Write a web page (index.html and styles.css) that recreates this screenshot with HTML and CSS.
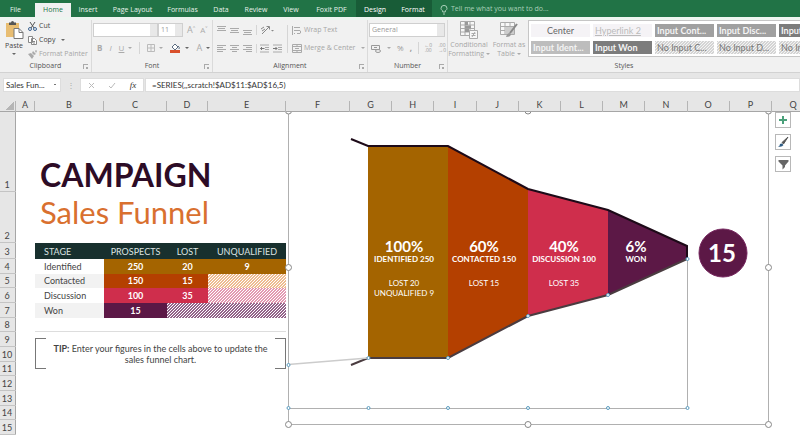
FILE: index.html
```html
<!DOCTYPE html>
<html lang="en">
  <head>
    <meta charset="UTF-8">
    <meta name="viewport" content="width=device-width, initial-scale=1.0">
    <title>Campaign Sales Funnel</title>
    <link rel="stylesheet" href="styles.css">
  </head>
  <body>
    <nav class="tabs">
      <a href="#" class="tab file">File</a>
      <a href="#" class="tab home">Home</a>
      <a href="#" class="tab insert">Insert</a>
      <a href="#" class="tab layout">Page Layout</a>
      <a href="#" class="tab formulas">Formulas</a>
      <a href="#" class="tab data">Data</a>
      <a href="#" class="tab review">Review</a>
      <a href="#" class="tab view">View</a>
      <a href="#" class="tab foxit">Foxit PDF</a>
      <a href="#" class="tab context">Design</a>
      <a href="#" class="tab context">Format</a>
      <a href="#" class="tell">
        <svg width="8" height="10" viewBox="0 0 8 10" fill="none" stroke="currentColor"><path d="M2.7 7V5.8C1.4 5 1 4.300 1 3.400a3 3 0 0 1 6 0C7 4.300 6.600 5 5.300 5.800V7zM3 9h2"/></svg>
        Tell me what you want to do...
      </a>
    </nav>

    <div class="ribbon">
      <section class="group clipboard">
        <div class="tools">
          <button class="big paste">
            <svg width="19" height="18" viewBox="0 0 19 18"><path d="M1 2h13v14H1z" fill="#e8bd72"/><path d="M4 4V1.500h2a1.500 1.500 0 0 1 3 0h2V4z" fill="#555"/><path d="M9 7.500h5l4 4v6H9z" fill="#fff" stroke="#777"/><path d="M14 7.500v4h4" fill="none" stroke="#777"/></svg>
            <span>Paste</span>
            <i class="arrow"></i>
          </button>
          <div class="stack">
            <button>
              <svg width="9" height="9" viewBox="0 0 9 9" fill="none" stroke="#3f6590"><path d="M2 0l4 6M7 0L3 6" stroke="#555"/><circle cx="2" cy="7" r="1.500"/><circle cx="7" cy="7" r="1.500"/></svg>
              Cut
            </button>
            <button>
              <svg width="9" height="9" viewBox="0 0 9 9" fill="#fff" stroke="#888"><path d="M.5.5h4v6h-4zM3.500 2.500h3l2 2v4h-5z"/><path d="M5 5.500h2M5 7h2"/></svg>
              Copy <i class="arrow"></i>
            </button>
            <button class="off">
              <svg width="9" height="9" viewBox="0 0 9 9" fill="#aaa"><path d="M0 4l3-1 3 3-2 3zM4 3l1-2 3 3-2 1zM7 1l1-1 1 1-1 2z"/></svg>
              Format Painter
            </button>
          </div>
        </div>
        <h2>Clipboard <i class="launch"></i></h2>
      </section>

      <section class="group font">
        <div class="rows">
          <div class="row">
            <select class="family" aria-label="Font"><option></option></select>
            <select class="size" aria-label="Font size"><option>11</option></select>
            <button class="letter">A&#x02C4;</button>
            <button class="letter small">A&#x02C5;</button>
          </div>
          <div class="row format">
            <button><b>B</b></button>
            <button><i>I</i></button>
            <button><u>U</u></button>
            <i class="arrow"></i>
            <hr>
            <button aria-label="Borders"><svg width="8" height="8" viewBox="0 0 8 8" fill="none" stroke="#bbb"><path d="M.5.5h7v7h-7zM4 0v8M0 4h8"/></svg></button>
            <i class="arrow"></i>
            <button aria-label="Fill color"><svg width="11" height="10" viewBox="0 0 11 10"><path d="M2 4l3-3 3 3-3 3z" fill="#fff" stroke="#5b6c80"/><path d="M8 3q2 1 1 3" fill="none" stroke="#5b6c80"/><path d="M0 7h10v3H0z" fill="#d9502c"/></svg></button>
            <i class="arrow dark"></i>
            <button class="letter">A</button>
            <i class="arrow dark"></i>
          </div>
        </div>
        <h2>Font <i class="launch"></i></h2>
      </section>

      <section class="group align">
        <div class="tools">
          <div class="icons">
            <button aria-label="Top align"><svg width="9" height="9" viewBox="0 0 9 9" stroke="#aaa"><path d="M0 .5h9M1 2.500h7M0 4.500h9"/></svg></button>
            <button aria-label="Middle align"><svg width="9" height="9" viewBox="0 0 9 9" stroke="#aaa"><path d="M0 2.500h9M1 4.500h7M0 6.500h9"/></svg></button>
            <button aria-label="Bottom align"><svg width="9" height="9" viewBox="0 0 9 9" stroke="#aaa"><path d="M0 4.500h9M1 6.500h7M0 8.500h9"/></svg></button>
            <button class="third" aria-label="Orientation"><svg width="14" height="10" viewBox="0 0 14 10" fill="none" stroke="#888"><path d="M2 9l7-7M6.500 1.500H9.500V4.500M1 4l3-2M2 6l3-2"/><path d="M11 5h3l-1.500 1.500z" fill="#888" stroke="none"/></svg></button>
            <button aria-label="Align left"><svg width="9" height="9" viewBox="0 0 9 9" stroke="#aaa"><path d="M0 1.500h9M0 3.500h6M0 5.500h9M0 7.500h6"/></svg></button>
            <button aria-label="Center"><svg width="9" height="9" viewBox="0 0 9 9" stroke="#aaa"><path d="M0 1.500h9M2 3.500h5M0 5.500h9M2 7.500h5"/></svg></button>
            <button aria-label="Align right"><svg width="9" height="9" viewBox="0 0 9 9" stroke="#aaa"><path d="M0 1.500h9M3 3.500h6M0 5.500h9M3 7.500h6"/></svg></button>
            <button aria-label="Decrease indent"><svg width="9" height="9" viewBox="0 0 9 9" stroke="#aaa" fill="none"><path d="M0 1h9M5 3.500h4M5 5.500h4M0 8h9"/><path d="M4.500 4.500h-4M2 3L.5 4.500 2 6" stroke="#777"/></svg></button>
            <button aria-label="Increase indent"><svg width="9" height="9" viewBox="0 0 9 9" stroke="#aaa" fill="none"><path d="M0 1h9M5 3.500h4M5 5.500h4M0 8h9"/><path d="M0 4.500h4M2.500 3L4 4.500 2.500 6" stroke="#777"/></svg></button>
          </div>
          <div class="stack wrap">
            <button class="off">
              <svg width="10" height="9" viewBox="0 0 10 9" fill="none" stroke="#aaa"><path d="M.5 0v9M2 1.500h6M2 4.500h6q1.500 1.500 0 3H5M2 7.500h1"/></svg>
              Wrap Text
            </button>
            <button class="off">
              <svg width="10" height="9" viewBox="0 0 10 9" fill="none" stroke="#aaa"><path d="M.5.5h9v8h-9zM0 2.500h10M0 6.500h10M3 4.500h4M5 0v2M5 7v2"/></svg>
              Merge &amp; Center <i class="arrow"></i>
            </button>
          </div>
        </div>
        <h2>Alignment <i class="launch"></i></h2>
      </section>

      <section class="group number">
        <div class="rows">
          <div class="row">
            <select class="general" aria-label="Number format"><option>General</option></select>
          </div>
          <div class="row currency">
            <button aria-label="Accounting format"><svg width="10" height="9" viewBox="0 0 10 9" fill="none" stroke="#999"><path d="M.5 1.500h8v4h-8zM3 3.500h3"/><ellipse cx="7" cy="7" rx="2.500" ry="1.500" fill="#eee"/></svg></button>
            <i class="arrow"></i>
            <button>%</button>
            <button><b>,</b></button>
            <hr>
            <button class="decimal">&larr;0<br>.00</button>
            <button class="decimal">.00<br>&rarr;0</button>
          </div>
        </div>
        <h2>Number <i class="launch"></i></h2>
      </section>

      <section class="group styles">
        <div class="tools">
          <button class="big off">
            <svg width="18" height="18" viewBox="0 0 18 18" fill="#f7f7f7" stroke="#aaa"><path d="M.5.5h14v14H.5zM.5 4h14M.5 7.500h14M.5 11h14M5 .5v14M10 .5v14"/><path d="M5 1h3v3H5zM5 4.500h6v3H5zM5 8h4v3H5z" fill="#999" stroke="none"/><path d="M9.500 9.500h8v8h-8zM11.500 12.500h4M11.500 14.500h4M15 11l-3 5"/></svg>
            <span>Conditional<br>Formatting <i class="arrow"></i></span>
          </button>
          <button class="big off">
            <svg width="18" height="18" viewBox="0 0 18 18" fill="#f7f7f7" stroke="#aaa"><path d="M.5 1.500h14v12H.5zM.5 5.500h14M.5 9.500h14M5 1.500v12M10 1.500v12"/><path d="M5 6h9v7H5z" fill="#ccc" stroke="none"/><path d="M17 3l-7 9" stroke="#888" stroke-width="2"/><path d="M6 16q1-4 4-4l1 1q0 3-5 3z" fill="#999" stroke="none"/></svg>
            <span>Format as<br>Table <i class="arrow"></i></span>
          </button>
          <div class="gallery">
            <button class="style plain center">Center</button>
            <button class="style plain link">Hyperlink 2</button>
            <button class="style mid">Input Cont...</button>
            <button class="style mid">Input Disc...</button>
            <button class="style dark">Input Iden...</button>
            <button class="style light">Input Ident...</button>
            <button class="style dark">Input Won</button>
            <button class="style hatch">No Input C...</button>
            <button class="style hatch">No Input D...</button>
            <button class="style hatch">No Input I...</button>
          </div>
        </div>
        <h2>Styles</h2>
      </section>
    </div>

    <div class="formula-bar">
      <select class="name-box" aria-label="Name box"><option>Sales Fun...</option></select>
      <span class="dots">&#8942;</span>
      <div class="fx">
        <button aria-label="Cancel"><svg width="7" height="7" viewBox="0 0 7 7" stroke="#bbb"><path d="M1 1l5 5M6 1L1 6"/></svg></button>
        <button aria-label="Enter"><svg width="8" height="7" viewBox="0 0 8 7" fill="none" stroke="#bbb"><path d="M1 4l2 2 4-5"/></svg></button>
        <button class="fn"><i>fx</i></button>
      </div>
      <input class="formula" type="text" aria-label="Formula" spellcheck="false" value="=SERIES(,,scratch!$AD$11:$AD$16,5)">
    </div>

    <div class="columns">
      <span class="corner"></span>
      <span>A</span><span>B</span><span>C</span><span>D</span><span>E</span><span>F</span>
      <span>G</span><span>H</span><span>I</span><span>J</span><span>K</span><span>L</span>
      <span>M</span><span>N</span><span>O</span><span>P</span><span>Q</span>
    </div>

    <main class="sheet">
      <span class="num">1</span>
      <span class="num">2</span>
      <span class="num">3</span>
      <span class="num">4</span>
      <span class="num">5</span>
      <span class="num">6</span>
      <span class="num">7</span>
      <span class="num">8</span>
      <span class="num">9</span>
      <span class="num">10</span>
      <span class="num">11</span>
      <span class="num">12</span>
      <span class="num">13</span>
      <span class="num">14</span>
      <span class="num">15</span>

      <h1 class="title">CAMPAIGN</h1>
      <p class="subtitle">Sales Funnel</p>

      <table class="stages">
        <thead>
          <tr><th class="stage">STAGE</th><th class="prospects">PROSPECTS</th><th class="lost">LOST</th><th>UNQUALIFIED</th></tr>
        </thead>
        <tbody>
          <tr class="identified"><td>Identified</td><td class="fill">250</td><td class="fill">20</td><td class="fill">9</td></tr>
          <tr class="contacted"><td>Contacted</td><td class="fill">150</td><td class="fill">15</td><td class="none"></td></tr>
          <tr class="discussion"><td>Discussion</td><td class="fill">100</td><td class="fill">35</td><td class="none"></td></tr>
          <tr class="won"><td>Won</td><td class="fill">15</td><td class="none" colspan="2"></td></tr>
        </tbody>
      </table>

      <div class="rule"></div>
      <p class="tip"><b>TIP:</b> Enter your figures in the cells above to update the sales funnel chart.</p>

      <svg class="chart" viewBox="286 112 486 322">
        <!-- chart frame -->
        <path class="frame" d="M288.500 108V424.500H768.500V108"/>
        <path class="frame" d="M288 408.500H687.500V259"/>

        <!-- funnel bands -->
        <path fill="#a46400" d="M368 146H448V358H368z"/>
        <path fill="#b44000" d="M448 146L528 189V316L448 358z"/>
        <path fill="#cf2e4c" d="M528 189L608 210V295L528 316z"/>
        <path fill="#5c1846" d="M608 210L687 246V259L608 295z"/>
        <path class="edge" d="M351 139L368 146H448L528 189L608 210L687 246V259"/>
        <path class="edge low" d="M351 365L368 358H448L528 316L608 295L687 259"/>
        <path d="M288 364.500L368 358" stroke="#ccc" stroke-width="1.500"/>

        <g class="handles">
          <circle cx="288.500" cy="111" r="3"/>
          <circle cx="528" cy="111" r="3"/>
          <circle cx="768.500" cy="111" r="3"/>
          <circle cx="288.500" cy="267.500" r="3"/>
          <circle cx="768.500" cy="267.500" r="3"/>
          <circle cx="288.500" cy="424.500" r="3"/>
          <circle cx="528" cy="424.500" r="3"/>
          <circle cx="768.500" cy="424.500" r="3"/>
        </g>
        <g class="points">
          <circle cx="288.500" cy="365" r="1.500"/>
          <circle cx="368.500" cy="358" r="1.500"/>
          <circle cx="448" cy="358" r="1.500"/>
          <circle cx="528" cy="316" r="1.500"/>
          <circle cx="608" cy="295" r="1.500"/>
          <circle cx="687.500" cy="259" r="1.500"/>
          <circle cx="288.500" cy="408" r="1.500"/>
          <circle cx="368.500" cy="408" r="1.500"/>
          <circle cx="448" cy="408" r="1.500"/>
          <circle cx="528" cy="408" r="1.500"/>
          <circle cx="608" cy="408" r="1.500"/>
          <circle cx="687.500" cy="408" r="1.500"/>
        </g>

        <g class="labels">
          <text class="pct" x="404" y="252">100%</text>
          <text class="name" x="404" y="262">IDENTIFIED 250</text>
          <text x="404" y="286">LOST 20</text>
          <text x="404" y="296">UNQUALIFIED 9</text>
          <text class="pct" x="484" y="252">60%</text>
          <text class="name" x="484" y="262">CONTACTED 150</text>
          <text x="484" y="286">LOST 15</text>
          <text class="pct" x="564" y="252">40%</text>
          <text class="name" x="564" y="262">DISCUSSION 100</text>
          <text x="564" y="286">LOST 35</text>
          <text class="pct" x="636" y="252">6%</text>
          <text class="name" x="636" y="262">WON</text>
        </g>

        <circle cx="723" cy="253" r="24" fill="#5c1846" stroke="#76275f"/>
        <text class="total" x="722" y="262">15</text>
      </svg>

      <div class="chart-buttons">
        <button aria-label="Chart elements"><svg width="10" height="10" viewBox="0 0 10 10" stroke="#4aa07a" stroke-width="2"><path d="M5 1v8M1 5h8"/></svg></button>
        <button aria-label="Chart styles"><svg width="12" height="12" viewBox="0 0 12 12"><path d="M11 1L5 6.500l1.500 1.500z" fill="#555" stroke="#555"/><path d="M1 10.500q2-.5 2-2.500 2-1.500 3.500 1-1.500 2.500-5.500 1.500z" fill="#2f5d85"/></svg></button>
        <button aria-label="Chart filters"><svg width="11" height="11" viewBox="0 0 11 11"><path d="M.5 1h10v1.500L7 6.500V8L4.500 10.500v-4L.5 2.500z" fill="#666"/></svg></button>
      </div>
    </main>
  </body>
</html>
```

FILE: styles.css
```css
* {
  box-sizing: border-box;
}
body {
  margin: 0;
  min-height: 100vh;
  display: flex;
  flex-direction: column;
  overflow: hidden;
  background-color: #e6e6e6;
  font-family: "Open Sans", "Noto Sans", sans-serif;
  font-size: 7px;
  line-height: 10px;
  color: #444;
}
button,
select,
input {
  margin: 0;
  padding: 0;
  border: 0;
  border-radius: 0;
  background-color: transparent;
  font: inherit;
  color: inherit;
  appearance: none;
}
svg {
  display: block;
  flex: none;
}
h1,
h2,
p {
  margin: 0;
  font-weight: normal;
}

/* tabs */
.tabs {
  display: flex;
  height: 17px;
  background-color: #217346;
}
.tab,
.tell {
  color: #e6f2ea;
  text-decoration: none;
  text-align: center;
  line-height: 20px;
  white-space: nowrap;
}
.file {
  width: 31px;
}
.home {
  width: 36px;
  height: 14px;
  margin: 3px 0 0 4px;
  line-height: 14px;
  background-color: #f1f1f1;
  color: #217346;
}
.insert {
  width: 34px;
}
.layout {
  width: 55px;
}
.formulas {
  width: 45px;
}
.data {
  width: 32px;
}
.review {
  width: 38px;
}
.view {
  width: 32px;
}
.foxit {
  width: 49px;
}
.context {
  width: 38px;
  background-color: #185c37;
  color: #fff;
}
.tell {
  display: flex;
  align-items: center;
  gap: 3px;
  margin-left: 8px;
  color: #a9d0b8;
}
.tell svg {
  margin-top: 2px;
}

/* ribbon */
.ribbon {
  display: flex;
  height: 56px;
  border-top: 3px solid #edf5f0;
  border-bottom: 1px solid #d2d2d2;
  background-color: #f1f1f1;
}
.group {
  display: flex;
  flex-direction: column;
  justify-content: space-between;
  border-right: 1px solid #dadada;
}
.group h2 {
  display: flex;
  justify-content: center;
  font-size: 7px;
  line-height: 12px;
  color: #555;
  position: relative;
}
.launch {
  position: absolute;
  right: 3px;
  top: 4px;
  width: 5px;
  height: 5px;
  border-left: 1px solid #aaa;
  border-top: 1px solid #aaa;
  background: linear-gradient(#aaa, #aaa) right bottom / 2px 2px no-repeat;
}
.arrow {
  display: inline-block;
  flex: none;
  border: 2px solid transparent;
  border-top-color: #aaa;
  border-bottom: 0;
  vertical-align: middle;
}
.dark.arrow,
.clipboard .arrow {
  border-top-color: #666;
}
.off {
  color: #a6a6a6;
}
.tools {
  display: flex;
}
.clipboard {
  width: 92px;
}
.font {
  width: 121px;
}
.align {
  width: 155px;
}
.number {
  width: 80px;
}
.styles {
  flex: 1;
  min-width: 0;
  border-right: 0;
}
.big {
  display: flex;
  flex-direction: column;
  align-items: center;
  gap: 1px;
  padding-top: 1px;
  white-space: nowrap;
}
.paste {
  width: 28px;
  gap: 2px;
}
.stack {
  display: flex;
  flex-direction: column;
  gap: 4px;
}
.stack button {
  display: flex;
  align-items: center;
  gap: 2px;
  height: 10px;
  white-space: nowrap;
}
.stack .arrow {
  margin-left: 4px;
}
.rows {
  display: flex;
  flex-direction: column;
  gap: 4px;
  padding: 3px 1px;
}
.row {
  display: flex;
  align-items: center;
  height: 14px;
}
.row select {
  height: 14px;
  border: 1px solid #cfcfcf;
  background-color: #fff;
  color: #999;
  padding-left: 2px;
  background-image: linear-gradient(#e8e8e8, #e8e8e8);
  background-position: right;
  background-size: 7px 100%;
  background-repeat: no-repeat;
}
.family {
  width: 65px;
}
.row .size {
  width: 25px;
  margin-right: 4px;
}
.letter {
  font-size: 9px;
  color: #aaa;
}
.small {
  font-size: 8px;
  margin-left: 5px;
}
.format {
  gap: 7px;
  padding-left: 4px;
  font-size: 8px;
  color: #aaa;
}
.format .arrow {
  margin-left: -3px;
}
hr {
  width: 1px;
  height: 12px;
  margin: 0;
  border: 0;
  background-color: #d5d5d5;
}
.icons {
  display: grid;
  grid-template-columns: repeat(3, 13px) 13px 14px;
  gap: 9px 0;
  width: 74px;
  margin-top: 5px;
  padding-left: 4px;
}
.icons .third {
  grid-column: 4 / 6;
}
.icons button:nth-child(4),
.icons button:nth-child(8) {
  padding-left: 3px;
  border-left: 1px solid #d5d5d5;
}
.icons button:nth-child(9) {
  padding-left: 4px;
}
.wrap {
  gap: 8px;
  margin-top: 5px;
  padding-left: 4px;
  border-left: 1px solid #d5d5d5;
}
.clipboard .stack {
  margin-top: 1px;
}
.general {
  width: 76px;
}
.currency {
  gap: 6px;
  padding-left: 2px;
  font-size: 8px;
  color: #999;
}
.decimal {
  font-size: 5px;
  line-height: 5px;
}
.styles .big {
  width: 38px;
  flex: none;
  line-height: 9px;
}
.styles .big:first-child {
  width: 42px;
}
.gallery {
  flex: 1;
  min-width: 0;
  display: grid;
  grid-template-columns: repeat(5, 59px);
  gap: 4px 3px;
  padding: 3px 2px;
  overflow: hidden;
  border: 1px solid #c6c6c6;
  border-right: 0;
  background-color: #fff;
  height: 37px;
}
.style {
  height: 13px;
  padding: 0 2px;
  overflow: hidden;
  text-align: left;
  white-space: nowrap;
  font-family: Lato, sans-serif;
  font-size: 9px;
  line-height: 12px;
  font-weight: bold;
  color: #f4f4f4;
}
.plain {
  background-color: #f5f3f6;
  color: #666;
  font-weight: normal;
}
.center {
  text-align: center;
}
.link {
  color: #bbb;
  text-decoration: underline;
}
.mid {
  background-color: #a0a0a0;
}
.light {
  background-color: #bdbdbd;
}
.style.dark {
  background-color: #7c7c7c;
}
.hatch {
  color: #777;
  font-weight: normal;
  background: linear-gradient(135deg, #d4d4d4 0 17%, #f4f4f4 17% 50%, #d4d4d4 50% 67%, #f4f4f4 67%) 0 0 / 3px 3px;
}

/* formula bar */
.formula-bar {
  display: flex;
  align-items: center;
  padding: 5px 0 5px 3px;
  font-family: Lato, sans-serif;
  font-size: 8px;
  color: #333;
}
.name-box,
.fx,
.formula {
  height: 14px;
  background-color: #fff;
  border: 1px solid #ddd;
}
.name-box {
  width: 58px;
  padding-left: 2px;
  background-image: linear-gradient(45deg, transparent 50%, #777 50%), linear-gradient(-45deg, transparent 50%, #777 50%);
  background-position: right 5px center, right 3px center;
  background-size: 2px 2px;
  background-repeat: no-repeat;
}
.dots {
  width: 19px;
  text-align: center;
  color: #aaa;
}
.fx {
  display: flex;
  align-items: center;
  justify-content: space-around;
  width: 64px;
  margin-right: 1px;
}
.fn {
  font-family: "Liberation Serif", serif;
  font-size: 9px;
  line-height: 9px;
}
.formula {
  flex: 1;
  padding-left: 6px;
}

/* sheet */
.columns,
.sheet {
  display: grid;
  grid-template-columns: 16px 19px 69px 63px 41px 78px 64px repeat(10, minmax(42px, 1fr)) 28px;
}
.columns {
  height: 15px;
  border-bottom: 1px solid #a6a6a6;
  font-family: Lato, sans-serif;
  font-size: 9px;
  line-height: 16px;
  text-align: center;
}
.columns span {
  border-right: 1px solid transparent;
  border-image: linear-gradient(transparent 30%, #b5b5b5 30%) 1;
}
.columns span:last-child {
  padding-left: 14px;
  border-right: 0;
}
.corner {
  background: linear-gradient(135deg, transparent 50%, #b5b5b5 50%) 6px 5px / 8px 8px no-repeat;
}
.sheet {
  flex: 1;
  grid-template-rows: 80px 51px 16px repeat(12, minmax(14px, 1fr));
  overflow: hidden;
  background: linear-gradient(to right, #e6e6e6 15px, #a6a6a6 15px 16px, #fff 16px);
  font-family: Lato, sans-serif;
}
.num {
  grid-column: 1;
  display: flex;
  align-items: flex-end;
  justify-content: center;
  padding-right: 2px;
  border-bottom: 1px solid #c4c4c4;
  font-size: 9px;
  line-height: 13px;
}
.title,
.subtitle {
  grid-column: 3 / 7;
  padding-left: 5px;
  white-space: nowrap;
}
.title {
  grid-row: 1;
  align-self: end;
  font-size: 32px;
  line-height: 34px;
  font-weight: bold;
  color: #2d0c26;
}
.subtitle {
  grid-row: 2;
  align-self: start;
  font-size: 31px;
  line-height: 40px;
  color: #d9702f;
}
.stages {
  grid-column: 3 / 7;
  grid-row: 3 / 8;
  width: 100%;
  height: 100%;
  table-layout: fixed;
  border-collapse: collapse;
  font-size: 9px;
  line-height: 13px;
  text-align: center;
}
.stages th,
.stages td {
  padding: 0;
}
.stages th {
  height: 16px;
  background-color: #18302e;
  color: #dde3e2;
  font-weight: normal;
}
.stages .stage {
  width: 69px;
}
.stages .prospects {
  width: 63px;
}
.stages .lost {
  width: 41px;
}
.stages th:first-child,
.stages td:first-child {
  padding-left: 9px;
  text-align: left;
}
.stages tr:nth-child(even) td:first-child {
  background-color: #f2f2f2;
}
.stages .fill {
  color: #fff;
  font-weight: bold;
}
.identified .fill {
  background-color: #a46400;
}
.contacted .fill {
  background-color: #b44000;
}
.discussion .fill {
  background-color: #cf2e4c;
}
.won .fill {
  background-color: #5c1846;
}
.contacted .none {
  background: linear-gradient(135deg, #eebc90 0 17%, #fff 17% 50%, #eebc90 50% 67%, #fff 67%) 0 0 / 3px 3px;
}
.discussion .none {
  background: linear-gradient(135deg, #e39ab2 0 17%, #fff 17% 50%, #e39ab2 50% 67%, #fff 67%) 0 0 / 3px 3px;
}
.won .none {
  background: linear-gradient(135deg, #94648a 0 17%, #fff 17% 50%, #94648a 50% 67%, #fff 67%) 0 0 / 3px 3px;
}
.rule {
  grid-column: 3 / 7;
  grid-row: 8;
  border-bottom: 1px solid #ddd;
}
.tip {
  position: relative;
  grid-column: 3 / 7;
  grid-row: 9 / 12;
  align-self: start;
  margin-top: 6px;
  padding: 5px 12px 4px;
  border: 1px solid #777;
  border-width: 0 1px;
  font-size: 9px;
  line-height: 11px;
  text-align: center;
}
.tip::before,
.tip::after {
  content: "";
  position: absolute;
  top: 0;
  bottom: 0;
  width: 10px;
  border: 1px solid #777;
  border-width: 1px 0;
}
.tip::before {
  left: 0;
}
.tip::after {
  right: 0;
}

/* chart */
.chart {
  grid-column: 7 / 18;
  grid-row: 1 / 16;
  width: 100%;
  overflow: visible;
}
.frame {
  fill: none;
  stroke: #b0b0b0;
}
.edge {
  fill: none;
  stroke: #1d0a18;
  stroke-width: 2;
}
.low {
  stroke: #4a3c40;
}
.handles circle {
  fill: #fff;
  stroke: #888;
}
.points circle {
  fill: #fff;
  stroke: #5a9cc0;
}
.chart text {
  font-size: 8px;
  fill: #fff;
  text-anchor: middle;
}
.chart .pct {
  font-size: 15px;
  font-weight: bold;
}
.chart .name {
  font-weight: bold;
}
.chart .total {
  font-size: 24px;
  font-weight: bold;
}
.chart-buttons {
  grid-column: 18;
  grid-row: 1;
  display: flex;
  flex-direction: column;
  gap: 6px;
  padding-left: 3px;
}
.chart-buttons button {
  display: flex;
  align-items: center;
  justify-content: center;
  width: 16px;
  height: 16px;
  border: 1px solid #b8b8b8;
  background-color: #fff;
}
```
